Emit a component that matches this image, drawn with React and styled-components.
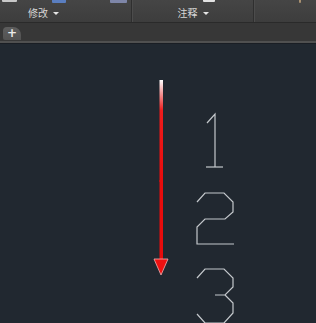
import React from "react";
import styled, { createGlobalStyle } from "styled-components";

const GlobalStyle = createGlobalStyle`
    html, body {
        margin: 0;
        padding: 0;
        background: #212830;
        overflow: hidden;
    }
    body {
        font-family: "Noto Sans CJK SC", "Liberation Sans", sans-serif;
    }
`;

const Screen = styled.div`
    width: 316px;
    height: 323px;
    display: flex;
    flex-direction: column;
`;

const Ribbon = styled.div`
    height: 22px;
    display: flex;
    background: linear-gradient(#454545, #3d3d3d);
    border-bottom: 1px solid #2a2a2a;
`;

const Panel = styled.div`
    width: ${(p) => p.width}px;
    flex: ${(p) => (p.width ? "none" : 1)};
    display: flex;
    flex-direction: column;
    border-right: ${(p) => (p.last ? "none" : "1px solid #2f2f2f")};
    box-shadow: ${(p) => (p.last ? "none" : "1px 0 0 #4c4c4c")};
    margin-right: ${(p) => (p.last ? 0 : 1)}px;
`;

const IconStrip = styled.div`
    height: 6px;
    position: relative;
    overflow: hidden;
`;

const IconBit = styled.span`
    position: absolute;
    top: 0;
    left: ${(p) => p.x}px;
    width: ${(p) => p.w}px;
    height: ${(p) => p.h}px;
    background: ${(p) => p.color};
    border-radius: 0 0 1px 1px;
`;

const PanelLabel = styled.div`
    flex: 1;
    display: flex;
    align-items: center;
    justify-content: ${(p) => (p.offset !== undefined ? "flex-start" : "center")};
    padding-left: ${(p) => p.offset || 0}px;
    gap: 5px;
    color: #d6d6d6;
    font-size: 10px;
    line-height: 1;
    padding-bottom: 2px;
`;

const Caret = styled.span`
    width: 0;
    height: 0;
    border-left: 3px solid transparent;
    border-right: 3px solid transparent;
    border-top: 3px solid #e4e4e4;
    margin-top: 1px;
`;

const TabBar = styled.div`
    height: 18px;
    background: #373737;
    display: flex;
    align-items: center;
    padding: 0 3px;
    border-bottom: 2px solid #505050;
`;

const PlusTab = styled.div`
    width: 18px;
    height: 13px;
    border-radius: 4px 8px 0 2px;
    background: linear-gradient(#5e5e5e, #525252);
    color: #ececec;
    font-family: "DejaVu Sans", sans-serif;
    font-size: 12px;
    font-weight: bold;
    line-height: 13px;
    text-align: center;
    margin-top: 3px;
`;

const Canvas = styled.div`
    flex: 1;
    background: #212830;
    border-top: 1px solid #1a1e24;
`;

const Drawing = styled.svg`
    display: block;
`;

// page y -> canvas y
const oy = 44;
const pts = (arr) => arr.map(([x, y]) => `${x},${y - oy}`).join(" ");

const one = [
    [[207, 123], [215, 114], [215, 167]],
    [[206, 167], [223, 167]],
];

const two = [
    [[197, 202], [205, 193], [224, 193], [233, 202], [233, 212], [225, 219], [205, 219], [197, 227], [197, 244], [234, 244]],
];

const three = [
    [[197, 278], [205, 269], [224, 269], [233, 278], [233, 287], [225, 295], [215, 295]],
    [[225, 295], [233, 303], [233, 313], [224, 323], [205, 323], [197, 314]],
];

const App = () => {
    return (
        <>
            <GlobalStyle />
            <Screen>
                <Ribbon>
                    <Panel width={131}>
                        <IconStrip>
                            <IconBit x={2} w={15} h={2} color="#c8c8c8" />
                            <IconBit x={52} w={14} h={3} color="#5a7ec0" />
                            <IconBit x={110} w={17} h={3} color="#7e86a8" />
                        </IconStrip>
                        <PanelLabel offset={28}>
                            修改
                            <Caret />
                        </PanelLabel>
                    </Panel>
                    <Panel width={120}>
                        <IconStrip>
                            <IconBit x={70} w={12} h={2} color="#e2e2e2" />
                        </IconStrip>
                        <PanelLabel>
                            注释
                            <Caret />
                        </PanelLabel>
                    </Panel>
                    <Panel last>
                        <IconStrip>
                            <IconBit x={44} w={2} h={3} color="#a89070" />
                        </IconStrip>
                    </Panel>
                </Ribbon>
                <TabBar>
                    <PlusTab>+</PlusTab>
                </TabBar>
                <Canvas>
                    <Drawing width="316" height="279" viewBox="0 0 316 279">
                        <defs>
                            <linearGradient id="shaft" x1="0" y1="0" x2="0" y2="1">
                                <stop offset="0" stopColor="#ffffff" />
                                <stop offset="0.12" stopColor="#f4a0a0" />
                                <stop offset="0.3" stopColor="#ee1c1c" />
                                <stop offset="1" stopColor="#e80c0c" />
                            </linearGradient>
                        </defs>
                        <rect x="159.5" y={80 - oy} width="3.5" height={182 - 80} fill="url(#shaft)" />
                        <rect x="159.5" y={180 - oy} width="3.5" height={80} fill="#e80c0c" />
                        <polygon
                            points={pts([[154, 259], [168, 259], [161, 275]])}
                            fill="#ee1111"
                            stroke="#f6b0b0"
                            strokeWidth="0.8"
                        />
                        <g fill="none" stroke="#c4c8cc" strokeWidth="1.2" strokeLinejoin="miter">
                            {[...one, ...two, ...three].map((line, i) => (
                                <polyline key={i} points={pts(line)} />
                            ))}
                        </g>
                    </Drawing>
                </Canvas>
            </Screen>
        </>
    );
};

export default App;
